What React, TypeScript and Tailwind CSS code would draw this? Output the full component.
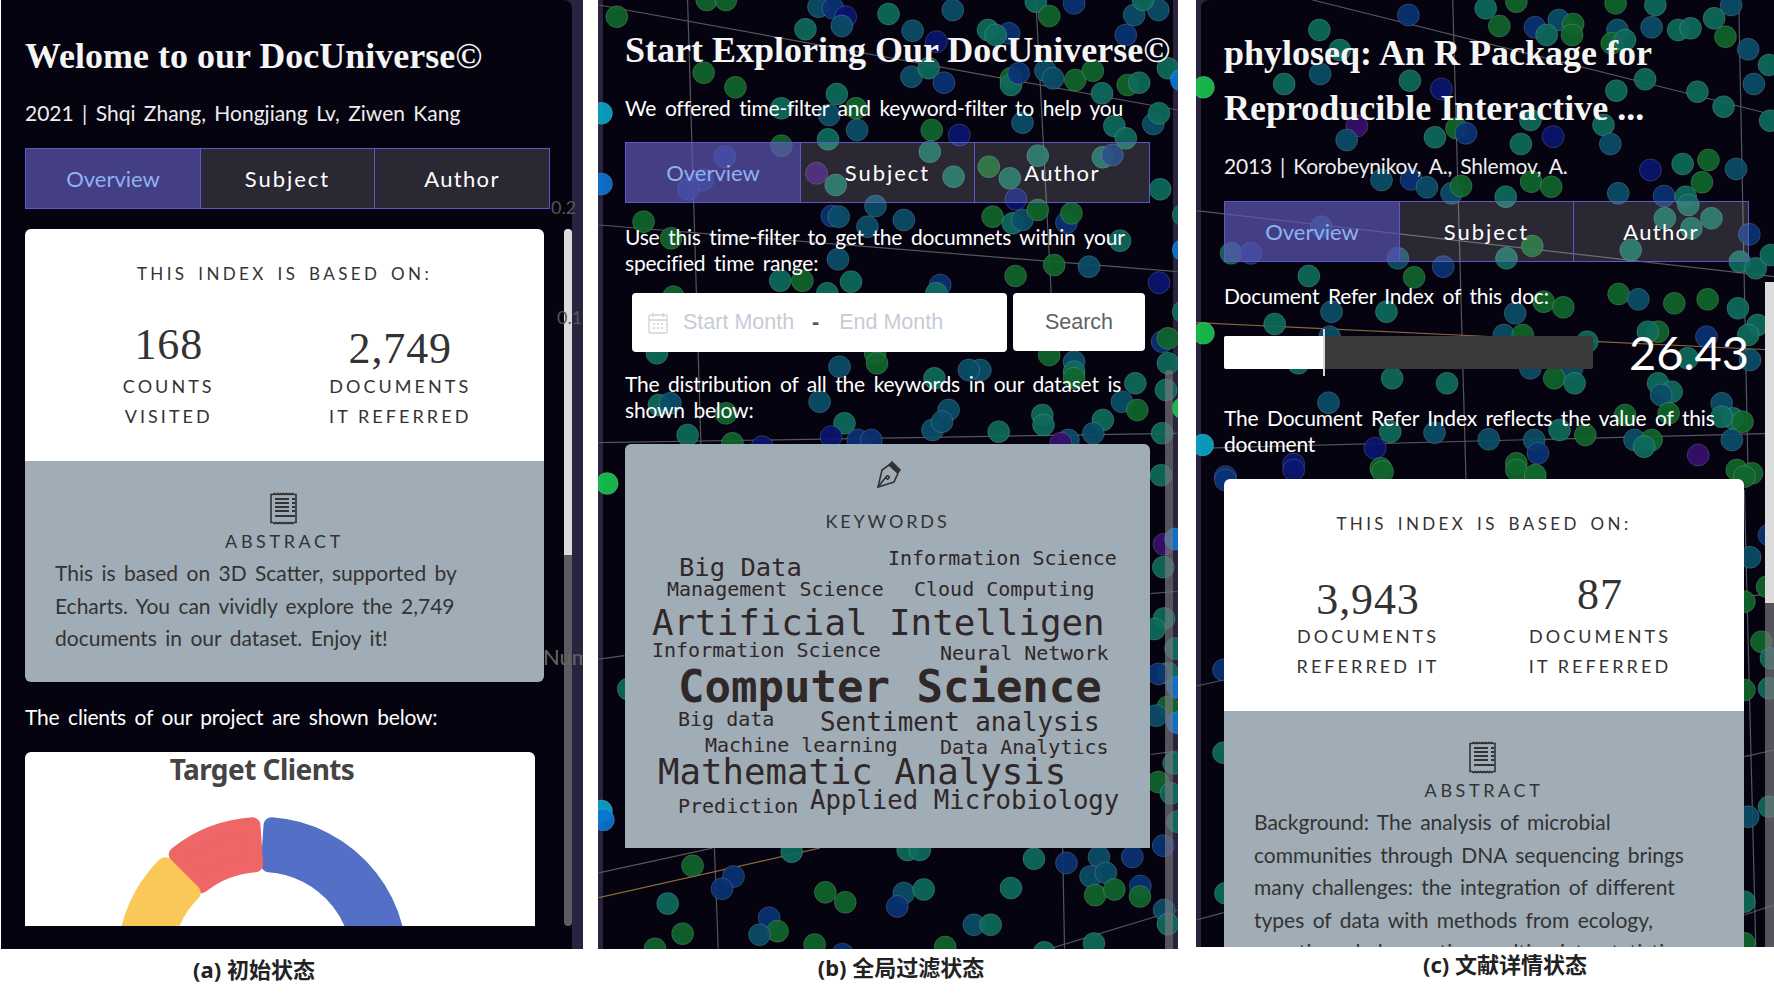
type Dot = [number, number, string];
type Seg = [number, number, number, number, string?];

const dotColors: Record<string, string> = {
  g: '#10662c',
  t: '#0e6a5c',
  b: '#0b4d68',
  n: '#0a3274',
  i: '#0a1670',
  p: '#36106c',
  c: '#0aa4c4',
  l: '#0c74d0',
  e: '#18c24e',
};

// positions read off the reference crops, in crop pixels
const dotsB: Dot[] = [
  [70, 50, 'g'], [305, 0, 'g'], [355, 0, 'g'], [597, 20, 'b'], [635, 25, 'n'], [668, 50, 'i'], [658, 78, 'b'], [780, 42, 't'],
  [563, 88, 't'], [843, 92, 'b'], [905, 125, 'i'], [948, 30, 'b'], [1040, 90, 't'], [1095, 100, 'n'], [1060, 105, 't'], [1165, 5, 't'],
  [1200, 48, 'g'], [1265, 10, 'n'], [1400, 105, 'n'], [1422, 45, 'b'], [1485, 30, 'b'], [1445, 0, 't'], [297, 218, 'g'], [380, 262, 'g'],
  [645, 282, 't'], [840, 230, 'b'], [885, 205, 't'], [925, 248, 'n'], [1100, 235, 'g'], [1100, 255, 't'], [1120, 220, 'n'], [1190, 212, 'b'],
  [1210, 235, 'b'], [1268, 240, 'g'], [1314, 212, 'g'], [1338, 280, 't'], [1405, 255, 'g'], [1435, 248, 't'], [1510, 205, 't'], [1545, 240, 'l'],
  [30, 340, 'c'], [30, 552, 'l'], [500, 325, 't'], [695, 325, 'g'], [625, 345, 'b'], [698, 390, 'b'], [893, 390, 'g'], [965, 405, 'i'],
  [1130, 368, 'b'], [1370, 378, 't'], [1400, 415, 't'], [1472, 372, 'b'], [1487, 340, 't'], [622, 418, 't'], [500, 437, 'g'], [352, 470, 'n'],
  [295, 540, 'n'], [257, 568, 'n'], [592, 520, 'p'], [642, 555, 't'], [888, 455, 't'], [950, 530, 't'], [1042, 500, 'g'], [1097, 535, 't'],
  [1170, 467, 't'], [1340, 472, 't'], [1365, 465, 'n'], [1113, 598, 'i'], [1490, 568, 't'], [140, 665, 'g'], [212, 715, 'g'], [632, 648, 'n'],
  [650, 650, 'b'], [746, 618, 'b'], [725, 680, 'b'], [820, 660, 'b'], [1052, 650, 'g'], [1105, 670, 't'], [1130, 660, 'b'], [1170, 630, 'g'],
  [1245, 668, 'n'], [1258, 640, 'g'], [1550, 645, 't'], [1385, 722, 't'], [1550, 750, 'l'], [648, 778, 'b'], [1213, 795, 'g'], [1304, 800, 'b'],
  [1112, 828, 'g'], [497, 842, 't'], [555, 842, 'g'], [682, 845, 't'], [915, 855, 'n'], [905, 880, 't'], [1487, 848, 'i'], [620, 880, 't'],
  [218, 890, 'g'], [175, 1060, 't'], [652, 1100, 'b'], [745, 1060, 'g'], [750, 1090, 'g'], [1200, 1065, 'g'], [1265, 1085, 'b'], [1265, 1115, 't'],
  [1265, 1135, 'g'], [1020, 1110, 'b'], [990, 1110, 'b'], [900, 1135, 't'], [1425, 1150, 't'], [1505, 1170, 't'], [1390, 1205, 'b'], [1430, 1230, 'g'],
  [1495, 1025, 'n'], [1510, 1015, 'g'], [600, 1205, 'b'], [180, 1215, 't'], [210, 1210, 'b'], [355, 1240, 'g'], [937, 1230, 'b'], [895, 1290, 'b'],
  [920, 1265, 'b'], [1182, 1245, 't'], [1185, 1275, 't'], [1340, 1260, 't'], [1315, 1300, 'b'], [255, 1305, 't'], [665, 1270, 't'], [630, 1310, 'i'],
  [700, 1320, 'n'], [735, 1320, 'n'], [1068, 1295, 't'], [1250, 1320, 'b'], [1495, 1300, 't'], [372, 1330, 'g'], [450, 1340, 'i'], [1230, 1330, 'p'],
  [1550, 1225, 'e'], [1550, 935, 't'], [1510, 1090, 't'],
];

const dotsB2: Dot[] = [
  [45, 123, 'e'], [1492, 100, 't'], [1498, 360, 't'], [1500, 295, 'p'], [1530, 280, 'l'], [1500, 505, 't'], [1475, 535, 't'], [1530, 590, 't'],
  [1510, 660, 't'], [1485, 662, 'n'], [1535, 700, 'l'], [1510, 755, 'g'], [1480, 780, 'b'], [1535, 800, 'l'], [1525, 915, 't'], [1485, 968, 'g'],
  [1518, 1000, 't'], [1535, 1080, 't'], [1498, 1148, 'n'], [100, 705, 't'], [30, 1050, 'c'], [35, 1075, 'l'], [268, 1205, 'g'], [527, 1165, 't'],
  [375, 1235, 'n'], [345, 1270, 'n'], [203, 1312, 't'], [242, 1397, 'g'], [170, 1440, 'g'], [468, 1352, 'n'], [490, 1390, 'g'], [443, 1400, 'b'],
  [615, 1280, 'g'], [667, 1308, 'g'], [587, 1428, 'g'], [660, 1455, 'n'], [820, 1282, 'b'], [803, 1320, 'n'], [872, 1272, 't'], [1003, 1372, 'b'],
  [1047, 1372, 't'], [928, 1435, 'g'], [1100, 1268, 't'], [1160, 1185, 't'], [1245, 1197, 'n'], [1330, 1180, 'b'], [1417, 1180, 'n'], [1308, 1235, 'b'],
  [1348, 1225, 'b'], [1320, 1288, 'g'], [1370, 1272, 'g'], [1438, 1262, 'n'], [1437, 1292, 'g'], [1500, 1330, 'b'], [1510, 1370, 't'], [1317, 1425, 't'],
  [1187, 1450, 't'], [830, 1160, 't'], [862, 1160, 't'],
];

const dotsC: Dot[] = [
  [603, 45, 'n'], [368, 90, 't'], [807, 25, 't'], [888, 5, 'g'], [843, 78, 'g'], [937, 82, 'n'], [1000, 60, 'b'], [968, 105, 't'],
  [1038, 72, 'g'], [1035, 105, 'g'], [1155, 90, 'b'], [1140, 130, 'g'], [1175, 120, 't'], [1150, 10, 'g'], [1255, 15, 't'], [1245, 82, 'b'],
  [1315, 90, 't'], [1348, 85, 't'], [1410, 55, 't'], [1440, 110, 'g'], [1455, 15, 'b'], [1500, 148, 'b'], [422, 150, 't'], [275, 252, 't'],
  [370, 222, 'b'], [607, 242, 't'], [690, 267, 'i'], [62, 262, 'e'], [1228, 238, 't'], [1152, 272, 't'], [1366, 275, 't'], [1435, 320, 't'],
  [1515, 252, 'b'], [1555, 195, 't'], [1558, 362, 't'], [467, 378, 'p'], [440, 420, 'b'], [673, 412, 't'], [730, 385, 'g'], [755, 400, 'n'],
  [925, 360, 't'], [900, 432, 't'], [985, 410, 'i'], [1118, 375, 't'], [1136, 432, 'b'], [532, 540, 'b'], [610, 538, 'n'], [652, 562, 'b'],
  [717, 580, 'b'], [742, 558, 'g'], [860, 590, 't'], [927, 545, 'g'], [980, 560, 'g'], [1157, 580, 'b'], [1242, 510, 'i'], [1278, 588, 'n'],
  [1327, 492, 't'], [1395, 480, 'g'], [1378, 547, 'g'], [1335, 590, 't'], [1342, 615, 't'], [1468, 507, 'b'], [1280, 655, 't'], [1403, 655, 't'],
  [1350, 685, 't'], [373, 680, 'b'], [135, 760, 't'], [187, 760, 'n'], [575, 775, 'b'], [930, 738, 'g'], [862, 775, 't'], [1190, 750, 't'],
  [1503, 703, 'n'], [1478, 785, 't'], [1520, 805, 't'], [1560, 765, 't'], [340, 828, 't'], [618, 832, 'g'], [695, 800, 'n'], [1158, 882, 'g'],
  [1210, 898, 'b'], [1305, 910, 'g'], [1393, 898, 'g'], [960, 905, 'g'], [1012, 922, 'g'], [885, 940, 'b'], [400, 935, 'b'], [545, 935, 't'],
  [1473, 925, 't'], [1525, 975, 't'], [250, 972, 't'], [62, 1000, 'e'], [1262, 995, 'g'], [1235, 995, 't'], [1390, 1010, 'n'], [1500, 1005, 't'],
  [855, 1005, 'b'], [905, 1005, 'g'], [1075, 1025, 't'], [1505, 1080, 'b'], [1340, 1075, 't'], [925, 1105, 'b'], [1035, 1105, 'b'], [988, 1135, 'g'],
  [1042, 1150, 't'], [560, 1135, 't'], [705, 1150, 't'], [312, 1090, 't'], [395, 1010, 'b'], [1262, 1150, 't'], [1298, 1175, 't'], [1270, 1185, 'b'],
  [1430, 1210, 'b'], [392, 1208, 'b'], [1290, 1240, 'g'], [1175, 1245, 'g'], [1460, 1255, 't'], [1485, 1265, 'g'], [1430, 1250, 't'], [1002, 1290, 't'],
  [1070, 1305, 'g'], [935, 1320, 'b'], [945, 1360, 'n'], [815, 1318, 'b'], [672, 1298, 'b'], [555, 1295, 't'], [515, 1345, 'i'], [1200, 1320, 'b'],
  [1245, 1320, 'g'], [1225, 1340, 't'], [1457, 1320, 'b'], [1368, 1365, 'p'], [60, 1335, 'c'], [300, 1392, 'i'], [888, 1390, 'g'], [530, 1405, 'g'],
  [120, 1430, 'n'], [937, 1430, 'g'], [1470, 1410, 'g'], [1510, 1420, 'g'],
];

const dotsC2: Dot[] = [
  [120, 30, 'n'], [300, 0, 'i'], [535, 5, 'g'], [888, 0, 'g'], [938, 15, 'g'], [1490, 20, 'g'], [1555, 195, 'n'], [1505, 262, 'b'],
  [1490, 395, 'g'], [1550, 350, 'g'], [1535, 515, 'g'], [1560, 565, 't'], [1490, 660, 'g'], [1555, 655, 't'], [115, 600, 'n'], [115, 848, 't'],
  [1500, 1040, 'b'], [1555, 1010, 't'], [120, 1270, 't'], [1490, 1295, 't'], [1490, 1420, 'g'],
];

const linesB: Seg[] = [
  [23, 15, 1535, 330], [255, 0, 290, 1340], [1165, 0, 1205, 880], [23, 675, 1535, 815], [23, 1328, 1535, 1300],
];
const linesB2: Seg[] = [
  [325, 1155, 335, 1440], [1235, 1155, 1240, 1440], [23, 1225, 320, 1155], [23, 1295, 600, 1155, '#8a6a3a'], [1200, 1440, 1535, 1330],
  [1465, 435, 1535, 428], [1465, 890, 1535, 880], [23, 620, 90, 610],
];
const linesC: Seg[] = [
  [350, 0, 1568, 345], [720, 0, 755, 1440], [1475, 0, 1500, 1440], [43, 632, 1568, 830], [43, 968, 1568, 1050, '#8a6a3a'], [43, 1345, 1568, 1300],
];
const linesC2: Seg[] = [
  [43, 648, 115, 630], [1490, 860, 1568, 840], [43, 1350, 115, 1328], [1490, 1335, 1568, 1305], [1490, 380, 1568, 370], [1490, 60, 1520, 1430],
];

const words = [
  { t: 'Big Data', x: 54, y: 124, s: 25.5 },
  { t: 'Information Science', x: 263, y: 114, s: 20 },
  { t: 'Management Science', x: 42, y: 145, s: 20 },
  { t: 'Cloud Computing', x: 289, y: 145, s: 20 },
  { t: 'Artificial Intelligen', x: 27, y: 179, s: 35.8 },
  { t: 'Information Science', x: 27, y: 206, s: 20 },
  { t: 'Neural Network', x: 315, y: 209, s: 20 },
  { t: 'Computer Science', x: 53, y: 243, s: 44, b: true },
  { t: 'Big data', x: 53, y: 275, s: 20 },
  { t: 'Sentiment analysis', x: 195, y: 279, s: 25.8 },
  { t: 'Machine learning', x: 80, y: 301, s: 20 },
  { t: 'Data Analytics', x: 315, y: 303, s: 20 },
  { t: 'Mathematic Analysis', x: 33, y: 328, s: 35.7 },
  { t: 'Prediction', x: 53, y: 362, s: 20 },
  { t: 'Applied Microbiology', x: 185, y: 357, s: 25.7 },
];

function Scatter({ groups, w, h, left }: {
  groups: { dots: Dot[]; lines: Seg[]; sx: number; sy: number; ox: number; oy: number }[];
  w: number;
  h: number;
  left: number;
}) {
  return (
    <svg className="absolute left-0 top-0" width={w} height={h}>
      {groups.map((g, i) => (
        <g key={i}>
          {g.lines.map(([a, b, c, d, col], j) => (
            <line
              key={j}
              x1={g.ox + a / g.sx - left}
              y1={g.oy + b / g.sy}
              x2={g.ox + c / g.sx - left}
              y2={g.oy + d / g.sy}
              stroke={col ?? '#55555c'}
              strokeWidth="1.2"
            />
          ))}
          {g.dots.map(([a, b, c], j) => (
            <circle
              key={j}
              cx={g.ox + a / g.sx - left}
              cy={g.oy + b / g.sy}
              r="11"
              fill={dotColors[c]}
              fillOpacity="0.92"
              stroke="#ffffff"
              strokeOpacity="0.16"
            />
          ))}
        </g>
      ))}
    </svg>
  );
}

function Tabs() {
  return (
    <div className="flex h-[61px] w-[525px] border border-[#5d58c4] text-[22px] [font-family:Lato,sans-serif]">
      <div className="flex w-[175px] items-center justify-center border-r border-[#5d58c4] bg-[#5f58b8]/70 text-[#8fb2f2]">Overview</div>
      <div className="flex w-[174px] items-center justify-center border-r border-[#5d58c4] bg-white/15 tracking-[0.09em] text-white">Subject</div>
      <div className="flex flex-1 items-center justify-center bg-white/15 tracking-[0.06em] text-white">Author</div>
    </div>
  );
}

function AbstractIcon() {
  return (
    <svg width="32" height="33" viewBox="0 0 32 33" fill="none" stroke="#333" className="block">
      <path d="M2 2.5h2l1.5-1 1.5 1 1.5-1 1.5 1 1.5-1 1.5 1 1.5-1 1.5 1 1.5-1 1.5 1 1.5-1 1.5 1 1.5-1 1.5 1h2v28h-2l-1.5 1-1.5-1-1.5 1-1.5-1-1.5 1-1.5-1-1.5 1-1.5-1-1.5 1-1.5-1-1.5 1-1.5-1-1.5 1-1.5-1h-2z" strokeWidth="1.6" />
      <path d="M6 7h14M6 11h14M6 15h14M6 19h14M6 24h20M23 7h3M23 11h3M23 15h3M23 19h3" strokeWidth="2" />
    </svg>
  );
}

function PenIcon() {
  return (
    <svg width="32" height="32" viewBox="0 0 32 32" fill="none" stroke="#333" strokeWidth="1.6">
      <path d="M20 3l8 8-2.5 2.5-8-8z" fill="#333" />
      <path d="M17 6l9 8-4 9-16 5 4-17z" />
      <path d="M6 28l8-10M14 18c1-2 4-1 3 1s-3 1-3-1z" />
    </svg>
  );
}

function IndexCard({ a, b, ay, by, aLines, bLines }: {
  a: string;
  b: string;
  ay: string;
  by: string;
  aLines: [string, string];
  bLines: [string, string];
}) {
  const labelCls = 'text-[18px] leading-[30px] tracking-[0.17em] text-[#333]';
  const numCls = "h-[50px] text-[44px] leading-[50px] tracking-[0.02em] text-[#333] [font-family:'Liberation_Serif',serif]";
  return (
    <div className="flex h-[232px] flex-col items-center rounded-t-md bg-white pt-[33px] [font-family:Lato,sans-serif]">
      <div className="text-[17px] leading-[24px] tracking-[0.2em] text-[#333] [word-spacing:3px]">THIS INDEX IS BASED ON:</div>
      <div className="mt-[34px] grid w-full grid-cols-2 px-[28px] text-center">
        <div>
          <div className={`${numCls} ${ay}`}>{a}</div>
          <div className={`${labelCls} mt-px`}>{aLines[0]}</div>
          <div className={labelCls}>{aLines[1]}</div>
        </div>
        <div>
          <div className={`${numCls} ${by}`}>{b}</div>
          <div className={`${labelCls} mt-px`}>{bLines[0]}</div>
          <div className={labelCls}>{bLines[1]}</div>
        </div>
      </div>
    </div>
  );
}

function Abstract({ lines, topPad, className }: { lines: string[]; topPad: string; className: string }) {
  return (
    <div className={`flex flex-col items-center bg-[#a0adb6] [font-family:Lato,sans-serif] ${topPad} ${className}`}>
      <AbstractIcon />
      <div className="mt-[4px] text-[18px] leading-[24px] tracking-[0.2em] text-[#333]">ABSTRACT</div>
      <div className="mt-[4px] w-full px-[30px] text-[21px] leading-[32.5px] text-[#333] [word-spacing:3px]">
        {lines.map((l) => (
          <div key={l} className="whitespace-nowrap">{l}</div>
        ))}
      </div>
    </div>
  );
}

function Donut() {
  const cx = 237;
  const cy = 210;
  const pt = (r: number, deg: number) => {
    const t = (deg * Math.PI) / 180;
    return `${cx + r * Math.sin(t)} ${cy - r * Math.cos(t)}`;
  };
  const sector = (a0: number, a1: number) =>
    `M${pt(137, a0)}A137 137 0 0 1 ${pt(137, a1)}L${pt(98, a1)}A98 98 0 0 0 ${pt(98, a0)}Z`;
  return (
    <svg width="510" height="174" className="block">
      <path d={sector(4, 100)} fill="#5470c6" stroke="#5470c6" strokeWidth="16" strokeLinejoin="round" />
      <path d={sector(-38.5, -4)} fill="#ee6666" stroke="#ee6666" strokeWidth="16" strokeLinejoin="round" />
      <path d={sector(-105, -45)} fill="#fac858" stroke="#fac858" strokeWidth="16" strokeLinejoin="round" />
    </svg>
  );
}

export default function App() {
  const textCls = "text-[21px] leading-[26px] text-white tracking-[-0.01em] [word-spacing:3.5px] [font-family:Lato,sans-serif]";
  const headCls = "font-bold text-[36px] text-[#f5f5f5] whitespace-nowrap [font-family:'Liberation_Serif',serif]";
  const capCls = "absolute text-[22px] font-bold leading-none text-[#222] whitespace-nowrap -translate-x-1/2 [font-family:'Noto_Sans','Noto_Sans_CJK_SC',sans-serif]";

  return (
    <div className="relative flex h-[994px] w-[1774px] items-start overflow-hidden bg-white pl-px">
      {/* panel a */}
      <div className="relative flex h-[949px] w-[582px] shrink-0 bg-[#2a2340]">
        <div className="h-full w-[571px] rounded-tr-lg bg-[#05030f] pl-[24px]">
          <div className={`${headCls} mt-[34px] leading-[44px]`}>Welome to our DocUniverse©</div>
          <div className="mt-[21px] text-[21px] leading-[28px] text-[#eee] [word-spacing:3px] [font-family:Lato,sans-serif]">2021 | Shqi Zhang, Hongjiang Lv, Ziwen Kang</div>
          <div className="mt-[21px]"><Tabs /></div>
          <div className="mt-[20px] w-[519px]">
            <IndexCard a="168" b="2,749" ay="" by="translate-y-[4px]" aLines={['COUNTS', 'VISITED']} bLines={['DOCUMENTS', 'IT REFERRED']} />
            <Abstract
              topPad="pt-[31px]"
              className="h-[221px] rounded-b-md"
              lines={['This is based on 3D Scatter, supported by', 'Echarts. You can vividly explore the 2,749', 'documents in our dataset. Enjoy it!']}
            />
          </div>
          <div className={`${textCls} mt-[22px]`}>The clients of our project are shown below:</div>
          <div className="mt-[22px] h-[174px] w-[510px] overflow-hidden rounded-t-md bg-white">
            <div className="relative">
              <Donut />
              <div className="absolute left-0 top-0 w-[474px] text-center text-[28px] font-bold leading-[34px] tracking-[-0.02em] text-[#444] [font-family:'Noto_Sans',sans-serif]">Target Clients</div>
            </div>
          </div>
        </div>
        <div className="absolute left-[563px] top-[229px] h-[697px] w-[8px] overflow-hidden rounded-full bg-[#5b5b62]">
          <div className="h-[326px] bg-[#dcdcdc]" />
        </div>
        <div className="absolute left-[550px] top-[194px] text-[18px] text-[#555] [font-family:Lato,sans-serif]">0.2</div>
        <div className="absolute left-[556px] top-[304px] w-[26px] overflow-hidden text-[18px] text-[#555] [font-family:Lato,sans-serif]">0.15</div>
        <div className="absolute left-[542px] top-[640px] w-[40px] overflow-hidden text-[22px] text-[#666] [font-family:Lato,sans-serif]">Num</div>
      </div>

      {/* panel b */}
      <div className="relative ml-[15px] h-[949px] w-[580px] shrink-0 overflow-hidden bg-[#2a2340]">
        <div className="absolute bottom-0 left-[5px] right-[5px] top-0 bg-[#05030f]" />
        <Scatter
          w={580}
          h={949}
          left={598}
          groups={[
            { dots: dotsB, lines: linesB, sx: 2.613, sy: 3, ox: 590, oy: 0 },
            { dots: dotsB2, lines: linesB2, sx: 2.613, sy: 2.83, ox: 590, oy: 440 },
          ]}
        />
        <div className="relative pl-[27px]">
          <div className={`${headCls} pt-[28px] leading-[44px]`}>Start Exploring Our DocUniverse©</div>
          <div className={`${textCls} mt-[23px]`}>We offered time-filter and keyword-filter to help you</div>
          <div className="mt-[21px]"><Tabs /></div>
          <div className={`${textCls} mt-[21px]`}>
            <div>Use this time-filter to get the documnets within your</div>
            <div>specified time range:</div>
          </div>
          <div className="ml-[7px] mt-[17px] flex gap-[6px] [font-family:'Liberation_Sans',sans-serif]">
            <div className="flex h-[59px] w-[375px] items-center rounded-[4px] bg-white pl-[16px] text-[21.5px] text-[#c6ccd6]">
              <svg width="20" height="22" viewBox="0 0 20 22" fill="none" stroke="#d0d4dc" strokeWidth="1.4">
                <rect x="1" y="3" width="18" height="18" rx="1" />
                <path d="M1 8h18M5 1v4M15 1v4M5 12h2M9 12h2M13 12h2M5 16h2M9 16h2M13 16h2" />
              </svg>
              <span className="ml-[15px] w-[112px] whitespace-nowrap">Start Month</span>
              <span className="ml-[17px] font-bold text-[#555]">-</span>
              <span className="ml-[20px] whitespace-nowrap">End Month</span>
            </div>
            <div className="flex h-[58px] w-[132px] items-center justify-center rounded-[4px] bg-white text-[21.5px] text-[#606266]">Search</div>
          </div>
          <div className={`${textCls} mt-[19px]`}>
            <div>The distribution of all the keywords in our dataset is</div>
            <div>shown below:</div>
          </div>
          <div className="relative mt-[21px] flex h-[404px] w-[525px] flex-col items-center rounded-t-md bg-[#a0adb6] pt-[15px]">
            <PenIcon />
            <div className="mt-[18px] text-[18px] leading-[24px] tracking-[0.16em] text-[#333] [font-family:Lato,sans-serif]">KEYWORDS</div>
            {words.map((w) => (
              <span
                key={w.t + w.x}
                className="absolute -translate-y-1/2 whitespace-nowrap leading-none text-[#302728] [font-family:'DejaVu_Sans_Mono',monospace]"
                style={{ left: w.x, top: w.y, fontSize: w.s, fontWeight: w.b ? 700 : 400 }}
              >
                {w.t}
              </span>
            ))}
          </div>
        </div>
        <div className="absolute right-[5px] top-[370px] h-[579px] w-[8px] rounded-t-full bg-[#77777d]/70" />
      </div>

      {/* panel c */}
      <div className="relative ml-[18px] h-[947px] w-[578px] shrink-0 overflow-hidden bg-[#2a2340]">
        <div className="absolute bottom-0 left-[5px] right-0 top-0 rounded-tl-lg bg-[#05030f]" />
        <Scatter
          w={578}
          h={947}
          left={1196}
          groups={[
            { dots: dotsC, lines: linesC, sx: 2.64, sy: 3, ox: 1180, oy: 0 },
            { dots: dotsC2, lines: linesC2, sx: 2.64, sy: 3, ox: 1180, oy: 470 },
          ]}
        />
        <div className="relative pl-[28px]">
          <div className={`${headCls} pt-[26px] leading-[55px]`}>
            <div>phyloseq: An R Package for</div>
            <div>Reproducible Interactive ...</div>
          </div>
          <div className="mt-[16px] text-[21px] leading-[28px] text-[#eee] tracking-[-0.01em] [word-spacing:3px] [font-family:Lato,sans-serif]">2013 | Korobeynikov, A., Shlemov, A.</div>
          <div className="mt-[21px]"><Tabs /></div>
          <div className={`${textCls} mt-[21px]`}>Document Refer Index of this doc:</div>
          <div className="mt-[26px] flex h-[34px] items-center">
            <div className="relative h-[33px] w-[369px] rounded-[2px] bg-[#3a3a3a]">
              <div className="h-full w-[101px] rounded-l-[2px] bg-white" />
              <div className="absolute left-[99px] top-[-7px] h-[47px] w-[2px] bg-[#d8d8d8]" />
            </div>
            <div className="ml-[36px] text-[47px] leading-none text-white [font-family:Lato,sans-serif]">26.43</div>
          </div>
          <div className={`${textCls} mt-[36px]`}>
            <div>The Document Refer Index reflects the value of this</div>
            <div>document</div>
          </div>
          <div className="mt-[22px] w-[520px]">
            <IndexCard a="3,943" b="87" ay="translate-y-[5px]" by="" aLines={['DOCUMENTS', 'REFERRED IT']} bLines={['DOCUMENTS', 'IT REFERRED']} />
            <Abstract
              topPad="pt-[30px]"
              className="h-[260px]"
              lines={['Background: The analysis of microbial', 'communities through DNA sequencing brings', 'many challenges: the integration of different', 'types of data with methods from ecology,', 'genetics, phylogenetics, multivariate statistics']}
            />
          </div>
        </div>
        <div className="absolute right-0 top-[282px] h-[665px] w-[9px] bg-[#77777d]/70">
          <div className="h-[321px] bg-[#dcdcdc]" />
        </div>
      </div>

      <div className={`${capCls} left-[254px] top-[958px]`}>(a) 初始状态</div>
      <div className={`${capCls} left-[901px] top-[956px]`}>(b) 全局过滤状态</div>
      <div className={`${capCls} left-[1505px] top-[953px]`}>(c) 文献详情状态</div>
    </div>
  );
}
